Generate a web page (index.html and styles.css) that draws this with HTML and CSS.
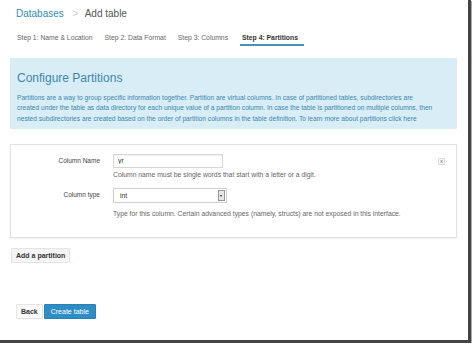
FILE: index.html
```html
<!DOCTYPE html>
<html lang="en">
<head>
    <meta charset="UTF-8">
    <meta name="viewport" content="width=device-width, initial-scale=1.0">
    <title>Add table</title>
    <link rel="stylesheet" href="styles.css">
</head>
<body>
    <div class="frame">
        <h1 class="crumbs">
            <a href="#" class="crumb-link">Databases</a>
            <span class="crumb-sep">&gt;</span>
            <span class="crumb-current">Add table</span>
        </h1>

        <ul class="steps">
            <li><a href="#">Step 1: Name &amp; Location</a></li>
            <li><a href="#">Step 2: Data Format</a></li>
            <li><a href="#">Step 3: Columns</a></li>
            <li class="active"><a href="#">Step 4: Partitions</a></li>
        </ul>

        <div class="hero">
            <h2>Configure Partitions</h2>
            <p>Partitions are a way to group specific information together. Partition are virtual columns. In case of partitioned tables, subdirectories are<br>
            created under the table as data directory for each unique value of a partition column. In case the table is partitioned on multiple columns, then<br>
            nested subdirectories are created based on the order of partition columns in the table definition. To learn more about partitions click here</p>
        </div>

        <div class="card">
            <button class="remove">x</button>
            <div class="field">
                <label class="field-label" for="colName">Column Name</label>
                <div class="field-control">
                    <input type="text" id="colName" value="yr">
                    <p class="help">Column name must be single words that start with a letter or a digit.</p>
                </div>
            </div>
            <div class="field">
                <label class="field-label">Column type</label>
                <div class="field-control">
                    <div class="select">
                        <span>int</span>
                        <span class="select-arrow"></span>
                    </div>
                    <p class="help help-type">Type for this column. Certain advanced types (namely, structs) are not exposed in this interface.</p>
                </div>
            </div>
        </div>

        <button class="btn btn-add">Add a partition</button>

        <div class="actions">
            <button class="btn btn-back">Back</button>
            <button class="btn btn-primary">Create table</button>
        </div>
    </div>
</body>
</html>
```

FILE: styles.css
```css
body {
    margin: 0;
    background-color: #ffffff;
    font-family: 'Liberation Sans', Arial, sans-serif;
    color: #333;
}
.frame {
    width: 471px;
    height: 343px;
    box-sizing: border-box;
    padding: 0 11px 0 10px;
    border-right: 3px solid #444;
    border-bottom: 3px solid #444;
    box-shadow: 1px 1px 0 #aaa;
    overflow: hidden;
}
.crumbs {
    margin: 0;
    padding: 8px 0 0 6px;
    font-size: 10px;
    line-height: 12px;
    font-weight: normal;
}
.crumb-link {
    color: #338bb8;
    text-decoration: none;
}
.crumb-sep {
    color: #ccc;
    margin: 0 4px 0 6px;
}
.crumb-current {
    color: #555;
}
.steps {
    list-style: none;
    margin: 12px 0 0 0;
    padding: 0 0 0 1px;
    display: flex;
}
.steps a {
    display: block;
    padding: 1px 6px;
    font-size: 6.8px;
    line-height: 10px;
    color: #666;
    text-decoration: none;
    border-bottom: 2px solid transparent;
}
.steps .active {
    margin-left: 6px;
}
.steps .active a {
    color: #333;
    font-weight: bold;
    padding: 1px 6px 1px 2px;
    border-bottom-color: #4a91b8;
}
.hero {
    margin-top: 12px;
    background-color: #d9edf7;
    padding: 13px 6px 5px 7px;
    color: #3a87ad;
}
.hero h2 {
    margin: 0 0 8px 0;
    font-size: 12px;
    line-height: 14px;
    font-weight: normal;
}
.hero p {
    margin: 0;
    font-size: 6.65px;
    line-height: 10.3px;
}
.card {
    position: relative;
    margin-top: 15px;
    border: 1px solid #e2e2e2;
    box-shadow: 0 1px 2px rgba(0,0,0,0.06);
    padding: 9px 0 18px 0;
}
.remove {
    position: absolute;
    top: 13px;
    right: 11px;
    width: 7px;
    height: 7px;
    padding: 0;
    border: 1px solid #ddd;
    background-color: #f7f7f7;
    font-family: 'Liberation Sans', Arial, sans-serif;
    font-size: 5px;
    line-height: 5px;
    color: #555;
}
.field {
    display: flex;
    align-items: flex-start;
}
.field + .field {
    margin-top: 8px;
}
.field-label {
    width: 89px;
    text-align: right;
    font-size: 6.5px;
    line-height: 14px;
    color: #444;
    padding-right: 13px;
}
.field-control {
    flex: 1;
}
input[type="text"] {
    display: block;
    width: 110px;
    height: 14px;
    box-sizing: border-box;
    border: 1px solid #d6d6d6;
    padding: 0 4px;
    font-family: 'Liberation Sans', Arial, sans-serif;
    font-size: 6.8px;
    color: #333;
    box-shadow: inset 0 1px 1px rgba(0,0,0,0.05);
}
.select {
    display: flex;
    align-items: center;
    justify-content: space-between;
    width: 114px;
    height: 15px;
    box-sizing: border-box;
    border: 1px solid #d0d0d0;
    padding: 0 1px 0 6px;
    font-size: 6.8px;
    color: #333;
}
.select-arrow {
    position: relative;
    width: 7px;
    height: 11px;
    box-sizing: border-box;
    border: 1px solid #999;
    background-color: #e6e6e6;
}
.select-arrow::after {
    content: "";
    position: absolute;
    left: 1px;
    top: 4px;
    border-left: 1.5px solid transparent;
    border-right: 1.5px solid transparent;
    border-top: 2px solid #222;
}
.help {
    margin: 0;
    font-size: 6.8px;
    line-height: 10px;
    color: #666;
    padding-top: 2px;
}
.help-type {
    padding-top: 6px;
}
.btn {
    font-family: 'Liberation Sans', Arial, sans-serif;
    font-size: 7px;
    line-height: 13px;
    border: 1px solid #e4e4e4;
    background-color: #f5f5f5;
    color: #333;
    padding: 0 4px;
    border-radius: 1px;
    cursor: pointer;
}
.btn-add {
    display: block;
    margin: 10px 0 0 1px;
    font-weight: bold;
}
.actions {
    display: flex;
    gap: 1px;
    margin: 41px 0 0 6px;
}
.btn-back {
    font-weight: bold;
    background-color: #fafafa;
}
.btn-primary {
    background-color: #2f8dc6;
    border-color: #2a80b4;
    color: #ffffff;
    padding: 0 6px;
}
```
